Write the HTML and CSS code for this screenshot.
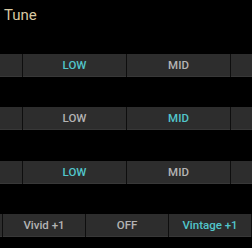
FILE: index.html
```html
<!DOCTYPE html>
<html lang="en">
<head>
  <meta charset="UTF-8">
  <meta name="viewport" content="width=device-width, initial-scale=1.0">
  <title>Tune</title>
  <link rel="stylesheet" href="styles.css">
</head>
<body>
  <h1 class="title">Tune</h1>

  <div class="rows">
    <div class="segments">
      <div class="seg"></div>
      <div class="seg active">LOW</div>
      <div class="seg">MID</div>
      <div class="seg"></div>
    </div>

    <div class="segments">
      <div class="seg"></div>
      <div class="seg">LOW</div>
      <div class="seg active">MID</div>
      <div class="seg"></div>
    </div>

    <div class="segments">
      <div class="seg"></div>
      <div class="seg active">LOW</div>
      <div class="seg">MID</div>
      <div class="seg"></div>
    </div>

    <!-- Filter row -->
    <div class="segments filters">
      <div class="seg"></div>
      <div class="seg">Vivid +1</div>
      <div class="seg">OFF</div>
      <div class="seg active">Vintage +1</div>
      <div class="seg"></div>
    </div>
  </div>
</body>
</html>
```

FILE: styles.css
```css
/* General */
body {
  margin: 0;
  padding: 0;
  background-color: #000;
  font-family: Roboto, "Liberation Sans", sans-serif;
  overflow: hidden;
}

.title {
  margin: 0;
  padding: 6px 0 0 4px;
  height: 48px;
  font-size: 15px;
  line-height: 18px;
  font-weight: 400;
  color: #d8c8a2;
}

.rows {
  display: flex;
  flex-direction: column;
  gap: 30.4px;
}

.segments {
  display: flex;
  gap: 1px;
  margin-left: -81px;
  height: 23px;
  background-color: #0e0e0e;
}

.seg {
  flex: 0 0 103px;
  display: flex;
  align-items: center;
  justify-content: center;
  background-color: #2d2d2d;
  border-bottom: 1px solid #383838;
  box-sizing: border-box;
  font-size: 11.5px;
  font-weight: 500;
  color: #b4b4b4;
}

.seg.active {
  color: #52c6cb;
}

.filters {
  margin-left: -80px;
}

.filters .seg {
  flex-basis: 82px;
}
```
